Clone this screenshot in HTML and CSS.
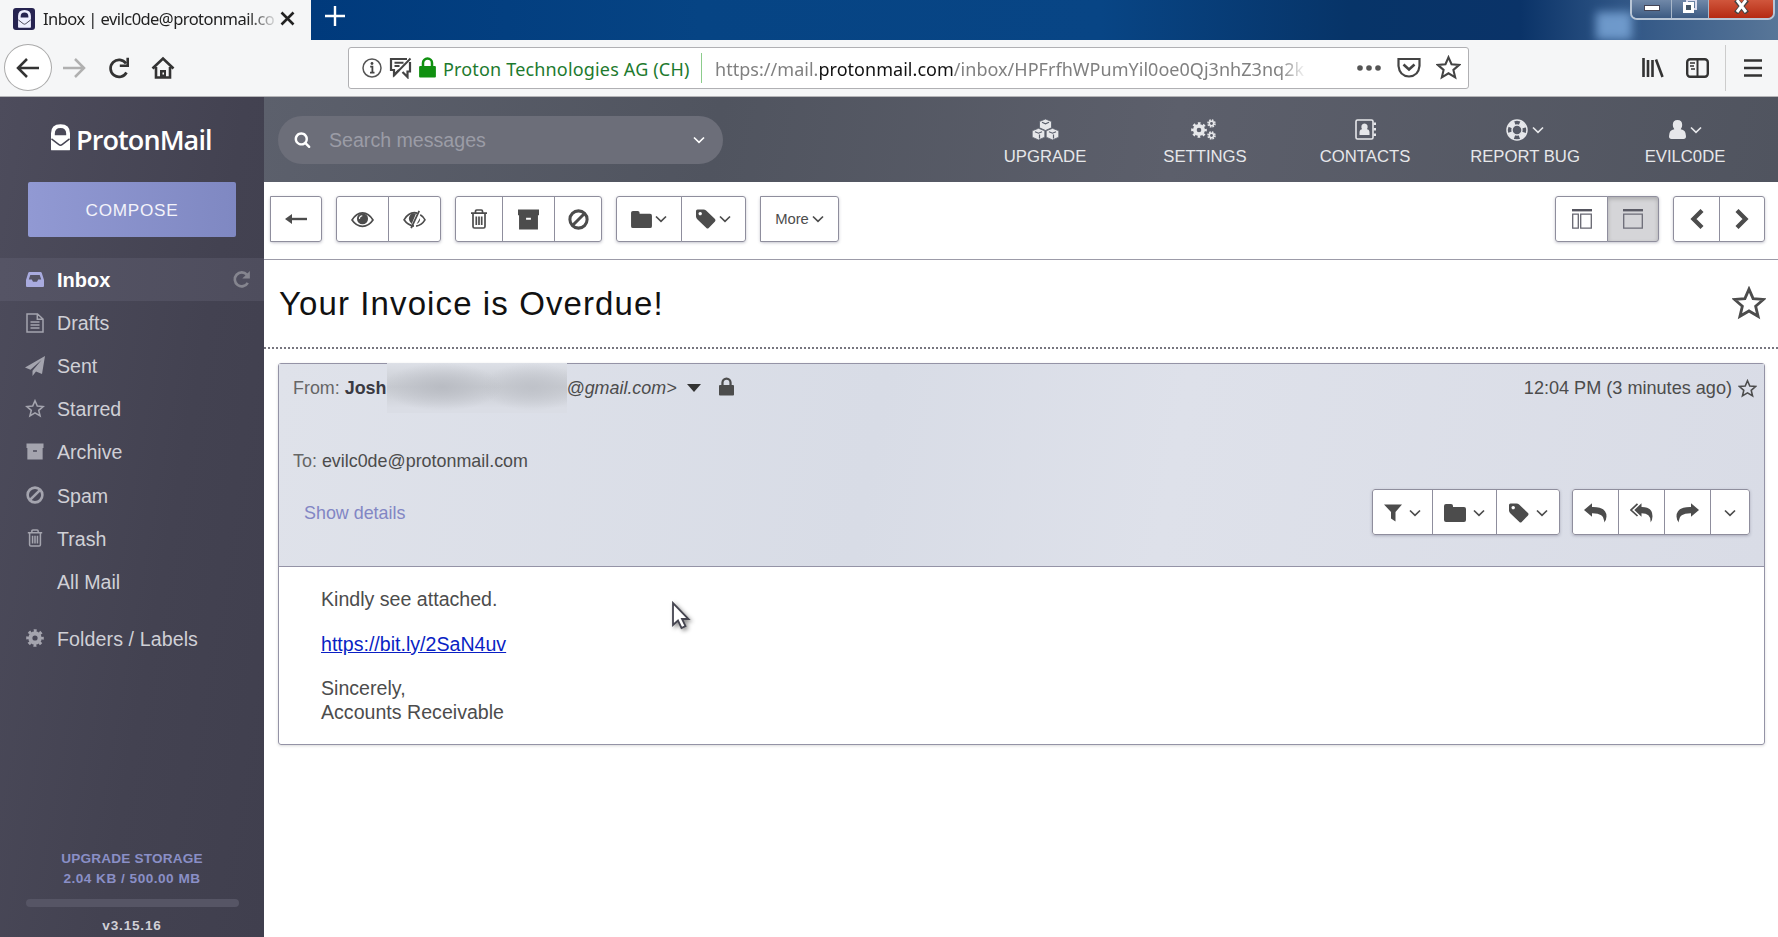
FILE: index.html
```html
<!DOCTYPE html>
<html lang="en">
<head>
  <meta charset="UTF-8" />
  <meta name="viewport" content="width=device-width, initial-scale=1.0" />
  <title>Inbox | evilc0de@protonmail.com</title>
  <link rel="stylesheet" href="styles.css">
</head>
<body>
  <svg class="sprite" width="0" height="0">
    <symbol id="search" viewBox="0 0 1792 1792"><path fill="currentColor" d="M1216 832q0-185-131.5-316.5t-316.5-131.5-316.5 131.5-131.5 316.5 131.5 316.5 316.5 131.5 316.5-131.5 131.5-316.5zm512 832q0 52-38 90t-90 38q-54 0-90-38l-343-342q-179 124-399 124-143 0-273.5-55.5t-225-150-150-225-55.5-273.5 55.5-273.5 150-225 225-150 273.5-55.5 273.5 55.5 225 150 150 225 55.5 273.5q0 220-124 399l343 343q37 37 37 90z"/></symbol>
    <symbol id="chev" viewBox="0 0 12 8"><path d="M1 1.500 6 6.300l5-4.800" fill="none" stroke="currentColor" stroke-width="1.700"/></symbol>
    <symbol id="star" viewBox="0 0 24 24"><path d="M12 2.200 14.900 8.900 22.200 9.500 16.700 14.300 18.400 21.400 12 17.600 5.600 21.400 7.300 14.300 1.800 9.500 9.100 8.900z" fill="none" stroke="currentColor" stroke-width="2"/></symbol>
    <symbol id="folder" viewBox="0 0 22 20"><path fill="currentColor" d="M0 3Q0 1 2 1h5q2 0 2 2v1h11q2 0 2 2v11q0 2-2 2H2q-2 0-2-2z"/></symbol>
    <symbol id="tag" viewBox="0 0 20 20"><path fill="currentColor" fill-rule="evenodd" d="M0 2Q0 .5 1.500.5h6q1.500 0 2.600 1.100l8.900 8.400q1 1.200 0 2.400l-6.300 6.500q-1.200 1-2.300 0L1.500 10.500Q0 9 0 7.500zM4.200 2.900a1.700 1.700 0 1 0 .01 0z"/></symbol>
    <symbol id="ban" viewBox="0 0 20 20"><g fill="none" stroke="currentColor" stroke-width="2.900"><circle cx="10" cy="10" r="8.200"/><path d="M4.500 15.500l11-11"/></g></symbol>
    <symbol id="trash" viewBox="0 0 18 20"><path d="M1 4.200h16M5.500 4V2.200Q5.500 1 6.700 1h4.600q1.200 0 1.200 1.200V4M3 4.500v13q0 1.500 1.500 1.500h9q1.500 0 1.500-1.500v-13M6.300 7.500v8.500M9 7.500v8.500M11.700 7.500v8.500" fill="none" stroke="currentColor" stroke-width="1.700"/></symbol>
    <symbol id="archive" viewBox="0 0 20 20"><path fill="currentColor" fill-rule="evenodd" d="M0 .5h20v5.500H0zM1 6h18v13.500H1zM7.700 8.400v1.800h4.600V8.400z"/></symbol>
    <symbol id="inbox" viewBox="0 0 18 15"><path fill="currentColor" fill-rule="evenodd" d="M3.400 0h11.200q.9 0 1.200.9L18 8v6q0 1-1 1H1q-1 0-1-1V8L2.200.9Q2.500 0 3.400 0zM4.300 3 2.800 7.500h3L7 9.800h4l1.200-2.300h3L13.700 3z"/></symbol>
    <symbol id="doc" viewBox="0 0 18 20"><path d="M1 1h10.500L17 6v13H1zM11.300 1v5.300H17M4.500 9h9M4.500 12h9M4.500 15h9" fill="none" stroke="currentColor" stroke-width="1.500"/></symbol>
    <symbol id="plane" viewBox="0 0 20 20"><path fill="currentColor" d="M20 0 17 18l-6-2.500L7.500 20v-5.200L16.500 4 5.500 13.700 0 11.500z"/></symbol>
    <symbol id="gear" viewBox="0 0 20 20"><circle cx="10" cy="10" r="5.200" fill="none" stroke="currentColor" stroke-width="4.600"/><circle cx="10" cy="10" r="8.200" fill="none" stroke="currentColor" stroke-width="3.200" stroke-dasharray="3.200 3.240" stroke-dashoffset="1.600"/></symbol>
    <symbol id="redo" viewBox="0 0 20 20"><path d="M16.600 13.500A7.300 7.300 0 1 1 15.700 5" fill="none" stroke="currentColor" stroke-width="2.800"/><path fill="currentColor" d="M18.800 1v8h-8z"/></symbol>
    <symbol id="eye" viewBox="0 0 22 16"><path d="M1 8.500Q5 1.600 11 1.600T21 8.500Q17 14.500 11 14.500T1 8.500z" fill="none" stroke="currentColor" stroke-width="1.600"/><circle cx="11" cy="7.300" r="5.300" fill="currentColor"/><path d="M8 7.400Q8.200 4.700 10.800 4.500" fill="none" stroke="#fff" stroke-width="1"/></symbol>
    <symbol id="eye-off" viewBox="0 0 22 18"><path d="M10.500 15.300Q4.500 14.500 1 9.300 5 2.500 11 2.500q1.500 0 2.600.4M16.500 4.500Q19.500 6.300 21 9.300q-3 5-8.500 6" fill="none" stroke="currentColor" stroke-width="1.600"/><path fill="currentColor" d="M12.500 3.200 8.300 13.200Q5.500 11 5.600 8 6 4.400 9.500 3.100zM16.300 7.500q.5 4-3.300 5.700z"/><path d="M15.500.8 7.800 17.300" stroke="currentColor" stroke-width="1.700"/></symbol>
    <symbol id="lock" viewBox="0 0 16 20"><path fill="currentColor" d="M0 9.500Q0 8.500 1 8.500h14q1 0 1 1V18.500q0 1-1 1H1q-1 0-1-1z"/><path d="M3.700 9V5.800a4.300 4.300 0 0 1 8.600 0V9" fill="none" stroke="currentColor" stroke-width="2.400"/></symbol>
    <symbol id="reply" viewBox="0 0 23 20"><path fill="currentColor" d="M0 7 8 .3V4q14.500-.4 14.500 9.500 0 3.500-2.500 6 1.500-9.500-12-9.300v3.500z"/></symbol>
    <symbol id="reply-all" viewBox="0 0 23 20"><path d="M7.500.8 1 7l6.500 6" fill="none" stroke="currentColor" stroke-width="1.700"/><path fill="currentColor" d="M4.300 7 11.500.3V4q11-.2 11 9.300 0 3.700-2 6.200.8-9.400-9-9.300v3.500z"/></symbol>
    <symbol id="filter" viewBox="0 0 18 18"><path fill="currentColor" d="M0 .5h18L11.500 8v9.500L7 14.500V8z"/></symbol>
    <symbol id="pm" viewBox="0 0 20 28"><path fill="currentColor" fill-rule="evenodd" d="M0 12V9.500Q0 0 10 0t10 9.500V26.500q0 1-1 1H1q-1 0-1-1zM4 11.500h12V10Q16 4 10 4T4 10z"/><path d="M.5 15.500 8 21.300q2 1.500 4 0l7.500-5.800" fill="none" stroke="#454453" stroke-width="1.500"/></symbol>
  </svg>

  <div class="tabbar">
    <div class="tab">
      <span class="favicon"><svg width="13" height="18"><use href="#pm"/></svg></span>
      <span class="tab-title">Inbox | evilc0de@protonmail.co</span>
      <svg class="tab-close" width="15" height="15" viewBox="0 0 15 15"><path d="M1.500 1.500l12 12M13.500 1.500l-12 12" stroke="#222" stroke-width="2.600"/></svg>
    </div>
    <svg class="tab-new" width="20" height="20" viewBox="0 0 20 20"><path d="M10 0v20M0 10h20" stroke="#fff" stroke-width="2.400"/></svg>
    <div class="glow"></div>
    <div class="winbtns">
      <span class="win min"><svg width="16" height="6" viewBox="0 0 16 6"><rect x=".5" y=".5" width="15" height="5" fill="#fff" stroke="#445"/></svg></span>
      <span class="win max"><svg width="16" height="15" viewBox="0 0 16 15"><path d="M5 2V0h9v9h-2" fill="none" stroke="#dde" stroke-width="2"/><rect x="2.500" y="3.500" width="8" height="8" fill="#456" stroke="#fff" stroke-width="3"/></svg></span>
      <span class="win close"><svg width="15" height="14" viewBox="0 0 15 14"><path d="M2 0l11 13M13 0L2 13" stroke="#444" stroke-width="5"/><path d="M3 0l9 12M12 0L3 12" stroke="#fff" stroke-width="3"/></svg></span>
    </div>
  </div>

  <div class="navbar">
    <span class="back"><svg width="24" height="22" viewBox="0 0 24 22"><path d="M23 11H2M11 2L2 11l9 9" fill="none" stroke="#333" stroke-width="2.500"/></svg></span>
    <svg class="fwd" width="24" height="22" viewBox="0 0 24 22"><path d="M1 11h21M13 2l9 9-9 9" fill="none" stroke="#b0b0b0" stroke-width="2.500"/></svg>
    <svg class="reload" width="22" height="22" viewBox="0 0 22 22"><path d="M18.500 15.500A8.500 8.500 0 1 1 18 6.500" fill="none" stroke="#333" stroke-width="2.700"/><path d="M21 .8V10h-9.200V7.600h6.600V.8z" fill="#333"/></svg>
    <svg class="home" width="24" height="24" viewBox="0 0 24 24"><path d="M1.500 12.500 12 2.500l10.500 10M5 11v10.500h14V11" fill="none" stroke="#333" stroke-width="2.600"/><path d="M9 14h6v8H9z" fill="#333"/><path d="M11.500 16.500h1.500v2h-1.500z" fill="#fff"/></svg>
    <div class="urlbar">
      <svg width="20" height="20" viewBox="0 0 20 20"><circle cx="10" cy="10" r="9" fill="none" stroke="#555" stroke-width="1.500"/><path d="M8.200 8.700h2.200v5.500M8 14.600h4.500" stroke="#444" stroke-width="1.800" fill="none"/><circle cx="10" cy="5.500" r="1.400" fill="#444"/></svg>
      <svg width="23" height="22" viewBox="0 0 23 22"><path d="M18 2H2v11h3v5l5-5M21 5v9.500h-2.500V20l-5-5" fill="none" stroke="#444" stroke-width="2.200"/><path d="M5.500 5.800h9M5.500 9h5M21.500 1.500 4.500 19" stroke="#444" stroke-width="1.900"/></svg>
      <svg class="lock-green" width="17" height="21"><use href="#lock"/></svg>
      <span class="owner">Proton Technologies AG (CH)</span>
      <span class="url">https://mail.<b>protonmail.com</b>/inbox/HPFrfhWPumYil0oe0Qj3nhZ3nq2k</span>
      <svg class="dots" width="24" height="6" viewBox="0 0 24 6"><g fill="#555"><circle cx="3" cy="3" r="2.800"/><circle cx="12" cy="3" r="2.800"/><circle cx="21" cy="3" r="2.800"/></g></svg>
      <svg class="pocket" width="24" height="21" viewBox="0 0 24 21"><path d="M1.500 2h21v7q-1 10-10.500 10.500Q2.500 19 1.500 9z" fill="none" stroke="#444" stroke-width="2.200"/><path d="M6.500 7.500 12 12.500l5.500-5" fill="none" stroke="#444" stroke-width="2.600"/></svg>
      <svg class="bookmark" width="25" height="25"><use href="#star"/></svg>
    </div>
    <svg class="library" width="22" height="21" viewBox="0 0 22 21"><path d="M1.500 1v19M6 3v17M10.500 3v17" stroke="#333" stroke-width="2.600"/><path d="M14 2.500 20.500 20" stroke="#333" stroke-width="2.600"/></svg>
    <svg class="sidebars" width="23" height="20" viewBox="0 0 23 20"><rect x="1.200" y="1.200" width="20.600" height="17.600" rx="3" fill="none" stroke="#333" stroke-width="2.400"/><path d="M11.500 1v18" stroke="#333" stroke-width="2"/><path d="M4 5h5M4 8h4M5 11h4" stroke="#333" stroke-width="1.400"/></svg>
    <span class="navsep"></span>
    <svg class="menu" width="18" height="18" viewBox="0 0 18 18"><path d="M0 1.500h18M0 9h18M0 16.500h18" stroke="#333" stroke-width="2.700"/></svg>
  </div>

  <div class="app">
    <div class="sidebar">
      <div class="logo"><svg width="19" height="27"><use href="#pm"/></svg><span>ProtonMail</span></div>
      <a class="compose">COMPOSE</a>
      <ul class="folders">
        <li class="active"><svg width="18" height="15"><use href="#inbox"/></svg><span>Inbox</span><svg class="refresh" width="19" height="19"><use href="#redo"/></svg></li>
        <li><svg width="18" height="20"><use href="#doc"/></svg><span>Drafts</span></li>
        <li><svg width="20" height="20"><use href="#plane"/></svg><span>Sent</span></li>
        <li><svg width="19" height="19"><use href="#star"/></svg><span>Starred</span></li>
        <li><svg width="18" height="17"><use href="#archive"/></svg><span>Archive</span></li>
        <li><svg width="18" height="18"><use href="#ban"/></svg><span>Spam</span></li>
        <li><svg width="16" height="18"><use href="#trash"/></svg><span>Trash</span></li>
        <li><svg width="18" height="18"></svg><span>All Mail</span></li>
        <li class="labels"><svg width="18" height="18"><use href="#gear"/></svg><span>Folders / Labels</span></li>
      </ul>
      <div class="storage">
        <a>UPGRADE STORAGE</a>
        <a class="quota">2.04 KB / 500.00 MB</a>
        <div class="bar"></div>
        <div class="version">v3.15.16</div>
      </div>
    </div>

    <div class="main">
      <div class="header">
        <div class="searchbox">
          <svg width="17" height="17"><use href="#search"/></svg>
          <span>Search messages</span>
          <svg class="chev" width="12" height="8"><use href="#chev"/></svg>
        </div>
        <div class="menu-items">
          <a><i><svg width="27" height="21" viewBox="0 0 27 21"><g fill="#e6e7ea" stroke="#5a5f6c" stroke-width=".8"><path d="M13.500 0l6 2.500v6.300l-6 2.700-6-2.700V2.500z"/><path d="M6.500 9.300l6.300 2.500v6.400l-6.300 2.700L.2 18.200v-6.400z"/><path d="M20.500 9.300l6.300 2.500v6.400l-6.300 2.700-6.300-2.700v-6.400z"/></g><path d="M10 3.300l3.500 1.500L17 3.300M3 12.700l3.500 1.500 3.500-1.500M17 12.700l3.500 1.500 3.500-1.500M7.500 15.500v4M21.500 15.500v4" fill="none" stroke="#5a5f6c" stroke-width="1.200"/></svg></i>UPGRADE</a>
          <a><i class="gears"><svg width="16" height="16"><use href="#gear"/></svg><svg width="9" height="21" viewBox="0 0 8 21"><g fill="none" stroke="#e6e7ea"><circle cx="4" cy="4.500" r="2.200" stroke-width="1.600"/><circle cx="4" cy="4.500" r="3.500" stroke-width="1.600" stroke-dasharray="1.600 1.150"/><circle cx="4" cy="16.500" r="2.200" stroke-width="1.600"/><circle cx="4" cy="16.500" r="3.500" stroke-width="1.600" stroke-dasharray="1.600 1.150"/></g></svg></i>SETTINGS</a>
          <a><i><svg width="21" height="21" viewBox="0 0 21 21"><rect x="1" y="1" width="17" height="19" rx="1.500" fill="none" stroke="#e6e7ea" stroke-width="1.600"/><path d="M4.500 16v-2.500q0-3 2.500-3.200Q6 8.500 6.500 6.500 7.500 4.500 9.500 4.500t3 2q.5 2-.5 3.800 2.500.2 2.500 3.200V16zM18.500 3.500H21V6h-2.500zM18.500 9H21v2.500h-2.500zM18.500 14.500H21V17h-2.500z" fill="#e6e7ea"/></svg></i>CONTACTS</a>
          <a><i><svg width="22" height="22" viewBox="0 0 22 22"><g fill="none" stroke="#e6e7ea"><circle cx="11" cy="11" r="10" stroke-width="1.500"/><circle cx="11" cy="11" r="5" stroke-width="1.400"/><circle cx="11" cy="11" r="7.500" stroke-width="4.500" stroke-dasharray="6.780 5" stroke-dashoffset="9.280"/></g></svg><svg width="12" height="8"><use href="#chev"/></svg></i>REPORT BUG</a>
          <a><i><svg width="17" height="19" viewBox="0 0 17 19"><path fill="#e6e7ea" d="M8.500 0q4.700 0 4.700 5 0 2.600-1.500 4.300 5.300.7 5.300 7 0 2.700-2.500 2.700h-12Q0 19 0 16.300q0-6.300 5.300-7Q3.800 7.600 3.800 5q0-5 4.700-5z"/></svg><svg width="12" height="8"><use href="#chev"/></svg></i>EVILC0DE</a>
        </div>
      </div>

      <div class="toolbar">
        <div class="group"><span class="btn w52"><svg width="22" height="12" viewBox="0 0 22 12"><path d="M6 6h16" stroke="currentColor" stroke-width="2.400"/><path d="M0 6l7-5v10z" fill="currentColor"/></svg></span></div>
        <div class="group"><span class="btn w53"><svg width="23" height="17"><use href="#eye"/></svg></span><span class="btn w53"><svg width="23" height="19"><use href="#eye-off"/></svg></span></div>
        <div class="group"><span class="btn w48"><svg width="18" height="20"><use href="#trash"/></svg></span><span class="btn w53"><svg width="21" height="21"><use href="#archive"/></svg></span><span class="btn w48"><svg width="21" height="21"><use href="#ban"/></svg></span></div>
        <div class="group"><span class="btn w66"><svg width="21" height="19"><use href="#folder"/></svg><svg width="12" height="8"><use href="#chev"/></svg></span><span class="btn w65"><svg width="20" height="20"><use href="#tag"/></svg><svg width="12" height="8"><use href="#chev"/></svg></span></div>
        <div class="group"><span class="btn w79">More<svg width="12" height="8"><use href="#chev"/></svg></span></div>
        <div class="spacer"></div>
        <div class="group"><span class="btn w53"><svg width="20" height="20" viewBox="0 0 20 20"><path d="M0 1.200h20" stroke="#55555f" stroke-width="2.400"/><path d="M.7 5.200h5.600v14H.7zM8.700 5.200h10.600v14H8.700z" fill="none" stroke="#666670" stroke-width="1.300"/></svg></span><span class="btn w52 pressed"><svg width="20" height="20" viewBox="0 0 20 20"><path d="M0 1.200h20" stroke="#5c5c66" stroke-width="2.400"/><path d="M.7 5.200h18.600v14H.7z" fill="none" stroke="#6c6c77" stroke-width="1.300"/></svg></span></div>
        <div class="group"><span class="btn w47"><svg width="14" height="20" viewBox="0 0 14 20"><path d="M12 1.500 3.500 10l8.500 8.500" fill="none" stroke="currentColor" stroke-width="4.300"/></svg></span><span class="btn w46"><svg width="14" height="20" viewBox="0 0 14 20"><path d="M2 1.500l8.500 8.500L2 18.500" fill="none" stroke="currentColor" stroke-width="4.300"/></svg></span></div>
      </div>

      <div class="subject">
        <h1>Your Invoice is Overdue!</h1>
        <svg width="34" height="34"><use href="#star"/></svg>
      </div>

      <div class="message">
        <div class="msg-head">
          <div class="row from">
            <span class="lbl">From:</span><b>Josh</b><span class="redacted"></span><em>@gmail.com&gt;</em>
            <svg class="caret" width="14" height="8" viewBox="0 0 14 8"><path d="M0 0h14L7 8z" fill="#333"/></svg>
            <svg class="enc" width="15" height="19"><use href="#lock"/></svg>
            <span class="time">12:04 PM (3 minutes ago)</span>
            <svg class="mstar" width="19" height="19"><use href="#star"/></svg>
          </div>
          <div class="row to"><span class="lbl">To:</span><span>evilc0de@protonmail.com</span></div>
          <div class="actions">
            <a class="details">Show details</a>
            <div class="group"><span class="btn w61"><svg width="18" height="18"><use href="#filter"/></svg><svg width="12" height="8"><use href="#chev"/></svg></span><span class="btn w65"><svg width="22" height="20"><use href="#folder"/></svg><svg width="12" height="8"><use href="#chev"/></svg></span><span class="btn w64"><svg width="20" height="20"><use href="#tag"/></svg><svg width="12" height="8"><use href="#chev"/></svg></span></div>
            <div class="group"><span class="btn w47"><svg width="23" height="20"><use href="#reply"/></svg></span><span class="btn w47"><svg width="23" height="20"><use href="#reply-all"/></svg></span><span class="btn w47"><svg class="flip" width="23" height="20"><use href="#reply"/></svg></span><span class="btn w40"><svg width="12" height="8"><use href="#chev"/></svg></span></div>
          </div>
        </div>
        <div class="msg-body">
          <p>Kindly see attached.</p>
          <p><a href="#">https://bit.ly/2SaN4uv</a></p>
          <p>Sincerely,<br>Accounts Receivable</p>
        </div>
      </div>
    </div>
  </div>

  <svg class="cursor" width="24" height="32" viewBox="0 0 24 32"><path d="M2 2v22l5-4.500 3.500 7.500 4-2-3.500-7h6.500z" fill="#fff" stroke="#454550" stroke-width="1.800"/></svg>
</body>
</html>
```
FILE: styles.css
```css
* { box-sizing: border-box; }
body { margin: 0; height: 937px; overflow: hidden; display: flex; flex-direction: column; background: #fff; font-family: "Liberation Sans", Arial, sans-serif; color: #4c4c4c; }
svg { display: block; flex: none; }
.sprite { position: absolute; }

/* browser chrome */
.tabbar { height: 40px; flex: none; display: flex; position: relative; font-family: "Noto Sans", sans-serif; background: linear-gradient(90deg, #003a7c 311px, #064484 700px, #084585 1100px, #073468 1350px, #0a3368 1520px, #2f5585 1620px, #587698 1778px); }
.tab { width: 311px; display: flex; align-items: center; padding: 0 0 3px 13px; background: #f5f6f7; }
.favicon { width: 22px; height: 22px; border-radius: 3px; background: #262350; color: #eef; display: flex; align-items: center; justify-content: center; }
.tab-title { width: 234px; margin-left: 8px; white-space: nowrap; font-size: 16.5px; letter-spacing: -0.55px; color: #222; -webkit-mask-image: linear-gradient(90deg, #000 205px, transparent 236px); mask-image: linear-gradient(90deg, #000 205px, transparent 236px); }
.tab-close { margin-left: 3px; }
.tab-new { margin: 6px 0 0 14px; }
.glow { position: absolute; left: 1596px; top: 12px; width: 36px; height: 28px; background: #7fabdd; filter: blur(5px); opacity: .8; }
.winbtns { position: absolute; right: 3px; top: 0; width: 145px; height: 20px; display: flex; border: 2px solid #b9c6d6; border-top: 0; border-radius: 0 0 7px 7px; overflow: hidden; }
.win { display: flex; justify-content: center; width: 40px; background: linear-gradient(#7088a8, #3c5a82); border-right: 1px solid #a9b8ca; }
.win.max { width: 37px; }
.win.close { flex: 1; border: 0; background: linear-gradient(#d0563c, #b52a12); }
.win.min svg { margin-top: 5px; }

.navbar { height: 57px; flex: none; position: relative; display: flex; align-items: center; padding: 0 16px 1px 4px; background: #f5f6f7; border-bottom: 1px solid #b5b5b8; font-family: "Noto Sans", sans-serif; }
.back { width: 48px; height: 47px; border: 1px solid #aaa; border-radius: 50%; background: #fff; display: flex; align-items: center; justify-content: center; }
.fwd { margin-left: 10px; }
.reload { margin-left: 22px; }
.home { margin-left: 21px; }
.urlbar { width: 1121px; height: 42px; margin-left: 173px; display: flex; align-items: center; padding: 0 7px 0 13px; background: #fff; border: 1px solid #b0b0b3; border-radius: 3px; gap: 7px; }
.lock-green { color: #109010; }
.owner { width: 259px; height: 30px; line-height: 33px; font-size: 18px; letter-spacing: 0.17px; white-space: nowrap; color: #1d7a2e; border-right: 1px solid #8ccc8c; }
.url { width: 592px; margin-left: 6px; padding-top: 3px; font-size: 18px; white-space: nowrap; color: #808080; letter-spacing: 0.03px; -webkit-mask-image: linear-gradient(90deg, #000 565px, transparent 592px); mask-image: linear-gradient(90deg, #000 565px, transparent 592px); }
.url b { font-weight: 400; color: #111; }
.dots { margin-left: auto; }
.pocket { margin-left: 9px; }
.bookmark { margin-left: 8px; color: #444; }
.library { margin-left: auto; }
.sidebars { margin-left: 22px; }
.navsep { width: 1px; height: 46px; margin: 0 18px 0 16px; background: #ccc; }

/* sidebar */
.app { flex: 1; display: flex; min-height: 0; }
.sidebar { width: 264px; display: flex; flex-direction: column; background: linear-gradient(100deg, #4d4c5c, #434251 60%, #403f4e); color: #d0d0d6; }
.logo { height: 85px; padding: 27px 0 0 51px; display: flex; color: #fff; }
.logo span { margin: 1px 0 0 6px; font: 600 27px/30px "Open Sans", sans-serif; letter-spacing: -0.9px; }
.compose { margin: 0 28px 0 28px; height: 55px; line-height: 56px; text-align: center; font-size: 17.2px; letter-spacing: 0.7px; color: #f3f3fa; background: linear-gradient(90deg, #9199d3, #7f88c2); border-radius: 2px; }
.folders { list-style: none; margin: 21px 0 0; padding: 0; font-size: 19.6px; }
.folders li { height: 43.1px; display: flex; align-items: center; }
.folders li svg:first-child { width: 20px; margin-left: 25px; color: #a4a4ae; }
.folders li span { margin: 2px 0 0 12px; }
.folders .active { background: linear-gradient(90deg, #555465, #4e4d5d); color: #fff; font-weight: bold; font-size: 20px; }
.folders .active svg:first-child { color: #a9abdf; }
.folders .refresh { margin: 0 13px 0 auto; color: #85858f; }
.folders .labels { margin-top: 14px; letter-spacing: 0.1px; }
.storage { margin-top: auto; text-align: center; font-weight: bold; font-size: 13.6px; padding-bottom: 1px; }
.storage a { display: block; height: 20px; line-height: 20px; letter-spacing: 0.2px; color: #8a8fc6; }
.storage .quota { letter-spacing: 0.5px; }
.bar { height: 8px; margin: 10px 25px 9px 26px; border-radius: 4px; background: #565565; }
.version { height: 20px; line-height: 20px; letter-spacing: 0.8px; }

/* header */
.main { flex: 1; display: flex; flex-direction: column; min-width: 0; }
.header { height: 85px; padding-left: 14px; display: flex; align-items: center; background: linear-gradient(100deg, #5c606c, #50545f 30%, #5c5f6b 60%, #50545f); }
.searchbox { width: 445px; height: 48px; border-radius: 24px; display: flex; align-items: center; padding: 0 18px 0 16px; background: #6c6e79; color: #fff; }
.searchbox span { margin: 1px 0 0 18px; font-size: 19.6px; color: #9b9ca6; }
.searchbox .chev { margin-left: auto; }
.menu-items { margin-left: auto; margin-right: 13px; display: flex; }
.menu-items a { width: 160px; text-align: center; font-size: 16.7px; line-height: 24px; color: #e6e7ea; padding-top: 8px; }
.menu-items i { height: 22px; margin-bottom: 4px; display: flex; align-items: center; justify-content: center; gap: 4px; }
.menu-items .gears { gap: 0; margin-left: -4px; }

/* message toolbar */
.toolbar { height: 78px; flex: none; display: flex; align-items: flex-start; gap: 14px; padding: 14px 13px 0 6px; border-bottom: 1px solid #9c9ba8; }
.spacer { flex: 1; }
.group { display: flex; height: 46px; border-radius: 3px; background: #fff; box-shadow: 0 1px 3px rgba(60,60,90,0.3); }
.btn { display: flex; align-items: center; justify-content: center; gap: 3px; border: 1px solid #8f8e9d; font-size: 14.8px; }
.btn + .btn { margin-left: -1px; }
.btn:first-child { border-radius: 3px 0 0 3px; }
.btn:last-child { border-radius: 0 3px 3px 0; }
.pressed { background: #d5d5d8; box-shadow: inset 0 2px 4px rgba(0,0,0,0.2); }
.w40 { width: 40px; }
.w46 { width: 46px; }
.w47 { width: 47px; }
.w48 { width: 48px; }
.w52 { width: 52px; }
.w53 { width: 53px; }
.w61 { width: 61px; }
.w64 { width: 64px; }
.w65 { width: 65px; }
.w66 { width: 66px; }
.w79 { width: 79px; }

.subject { height: 89px; flex: none; display: flex; align-items: center; justify-content: space-between; padding: 0 12px 2px 15px; border-bottom: 2px dotted #77767f; }
.subject h1 { margin: 3px 0 0; font-size: 33px; font-weight: 400; letter-spacing: 1.1px; color: #111; }

.message { margin: 14px 13px 0 14px; border: 1px solid #9493a6; border-radius: 3px; box-shadow: 0 1px 3px rgba(0,0,0,0.15); }
.msg-head { height: 203px; padding: 12px 14px 0 14px; background: linear-gradient(100deg, #dfe2ea, #d8dce6 40%, #dee1ea 60%, #d9dce6); border-bottom: 1px solid #9493a6; font-size: 17.9px; }
.row { height: 24px; display: flex; align-items: center; white-space: nowrap; }
.lbl { color: #666; margin-right: 5px; }
.row b { color: #3a3a42; }
.redacted { width: 180px; height: 50px; margin-left: 1px; background: radial-gradient(ellipse 60px 24px at 55px 24px, #b9bcc3, transparent), radial-gradient(ellipse 50px 24px at 145px 24px, #bfc2c9, transparent), linear-gradient(#dde0e7, #c8cbd1 48%, #dadde5 90%); }
.row em { margin-left: -1px; }
.caret { margin-left: 10px; }
.enc { margin: -3px 0 0 18px; color: #4c4c4c; }
.time { margin-left: auto; font-size: 18.1px; }
.mstar { margin-left: 6px; margin-right: -7px; }
.to { margin-top: 49px; }
.actions { display: flex; gap: 12px; margin-top: 16px; }
.details { margin: 14px auto 0 11px; color: #8286c4; }
.actions .btn { gap: 7px; padding-top: 1px; }
.flip { transform: scaleX(-1); }
.msg-body { padding: 20px 0 20px 42px; font-size: 19.6px; line-height: 24px; }
.msg-body p { margin: 0 0 20.5px; }
.msg-body p:last-child { margin: 0; }
.msg-body a { color: #0a1fc4; }

.cursor { position: absolute; left: 671px; top: 601px; filter: drop-shadow(2px 2px 2px rgba(0,0,0,0.45)); }

/* right hand browser buttons */
.library { margin-right: 0; }
```
